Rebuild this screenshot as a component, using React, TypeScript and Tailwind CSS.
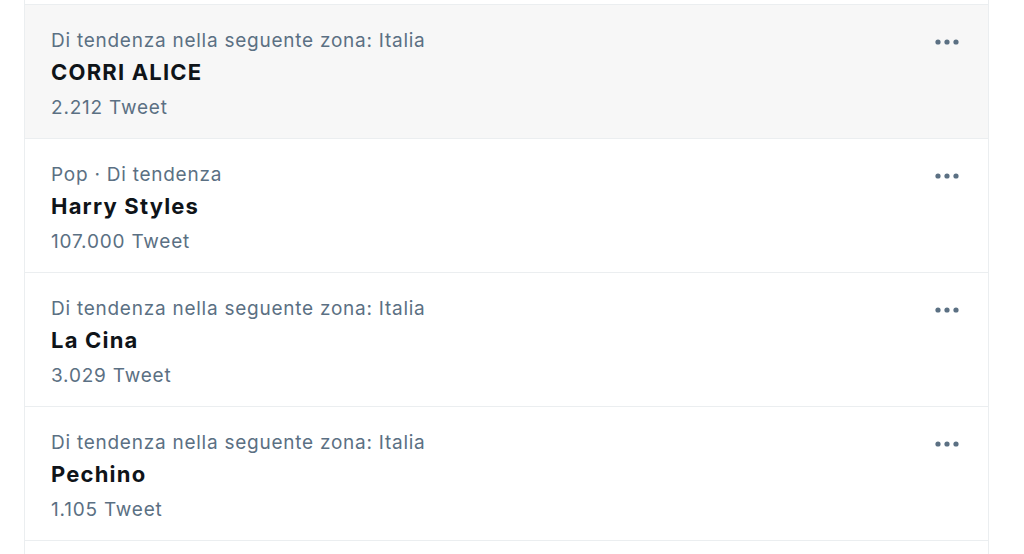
import React from 'react';

type Trend = { label: string; title: string; count: string; active?: boolean };

const TRENDS: Trend[] = [
  { label: 'Di tendenza nella seguente zona: Italia', title: 'CORRI ALICE', count: '2.212 Tweet', active: true },
  { label: 'Pop · Di tendenza', title: 'Harry Styles', count: '107.000 Tweet' },
  { label: 'Di tendenza nella seguente zona: Italia', title: 'La Cina', count: '3.029 Tweet' },
  { label: 'Di tendenza nella seguente zona: Italia', title: 'Pechino', count: '1.105 Tweet' },
];

const Dots = () => (
  <svg width="26" height="8" viewBox="0 0 26 8" className="text-[#5b7083]">
    <circle cx="4" cy="4" r="2.6" fill="currentColor" />
    <circle cx="13" cy="4" r="2.6" fill="currentColor" />
    <circle cx="22" cy="4" r="2.6" fill="currentColor" />
  </svg>
);

export default function App() {
  return (
    <div
      className="w-[1024px] h-[554px] overflow-hidden bg-white"
      style={{ fontFamily: 'Inter, "Liberation Sans", Arial, sans-serif' }}
    >
      <div className="ml-[24px] w-[965px] border-x border-[#ebeef0] h-full">
        <div className="h-[5px] border-b border-[#ebeef0]" />
        {TRENDS.map((t, i) => (
          <div
            key={i}
            className={`flex justify-between border-b border-[#ebeef0] pl-[26px] pr-[28px] pt-[23px] pb-[17px] ${t.active ? 'bg-[#f7f7f7]' : 'bg-white'}`}
          >
            <div className="flex flex-col">
              <span className="text-[19px] leading-[26px] tracking-[0.75px] text-[#5b7083]">{t.label}</span>
              <span className="text-[22px] leading-[36px] tracking-[1.2px] font-bold text-[#0f1419]">{t.title}</span>
              <span className="mt-[5px] text-[19px] leading-[26px] tracking-[0.8px] text-[#5b7083]">{t.count}</span>
            </div>
            <div className="pt-[10px]">
              <Dots />
            </div>
          </div>
        ))}
        <div className="h-[40px]" />
      </div>
    </div>
  );
}
